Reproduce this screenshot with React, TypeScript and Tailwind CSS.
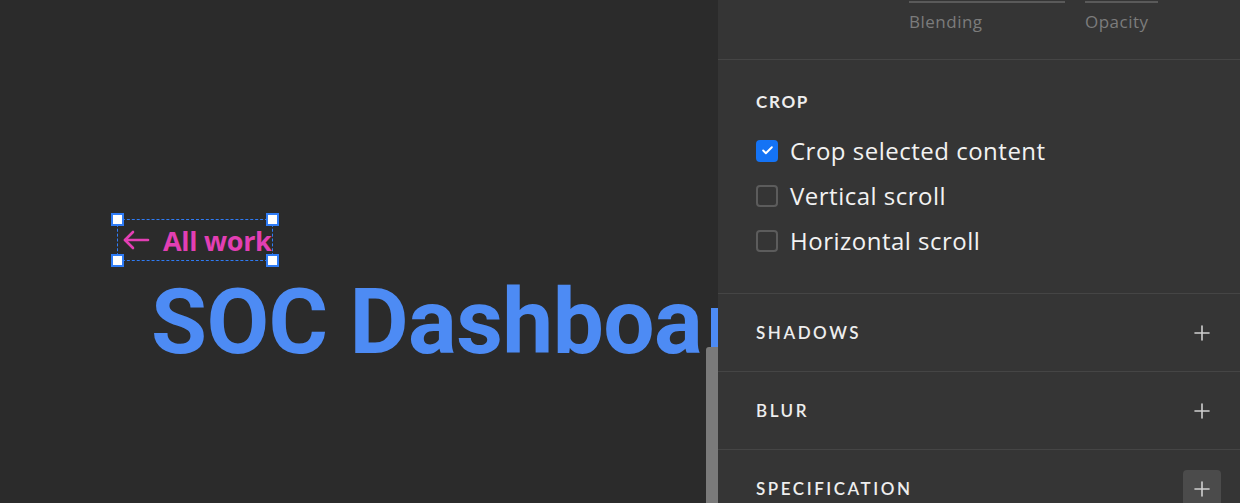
import { Check, Plus } from 'lucide-react';

const panelFont = { fontFamily: '"Lato", "Open Sans", sans-serif' };
const bodyFont = { fontFamily: '"Open Sans", "Lato", sans-serif' };

function Handle({ className }: { className: string }) {
  return <div className={`absolute w-[13px] h-[13px] bg-white border-2 border-[#2f7cf6] ${className}`} />;
}

function CheckRow({ label, checked }: { label: string; checked?: boolean }) {
  return (
    <div className="flex items-center gap-3 h-[45px]">
      {checked ? (
        <div className="w-[22px] h-[22px] rounded-[4px] bg-[#1473f5] flex items-center justify-center">
          <Check className="w-[13px] h-[13px] text-white" strokeWidth={3.5} />
        </div>
      ) : (
        <div className="w-[22px] h-[22px] rounded-[4px] border-2 border-[#5c5c5c]" />
      )}
      <span className="text-[24px] text-[#f2f2f2] leading-none tracking-[0.5px]" style={bodyFont}>
        {label}
      </span>
    </div>
  );
}

function Section({ title, boxed }: { title: string; boxed?: boolean }) {
  return (
    <div className="h-[78px] shrink-0 border-b border-[#454545] flex items-center justify-between pl-[38px] pr-[19px]">
      <span className="text-[17px] font-semibold tracking-[0.15em] text-[#eeeeee]">{title}</span>
      <div
        className={`w-[38px] h-[38px] flex items-center justify-center rounded-[4px] ${
          boxed ? 'bg-[#4b4b4b]' : ''
        }`}
      >
        <Plus className="w-[24px] h-[24px] text-[#d0d0d0]" strokeWidth={1.6} />
      </div>
    </div>
  );
}

export default function App() {
  return (
    <div className="w-[1240px] h-[503px] bg-[#2b2b2b] flex overflow-hidden relative">
      {/* canvas */}
      <div className="relative w-[718px] h-full overflow-hidden shrink-0">
        {/* All work selection */}
        <div className="absolute left-[117px] top-[219px] w-[156px] h-[42px] border-[1.5px] border-dashed border-[#2f7cf6]">
          <div className="flex items-center h-full pl-[4px] gap-[13px]">
            <svg width="28" height="22" viewBox="0 0 28 22" fill="none" stroke="#e33fb4" strokeWidth="2.6" strokeLinecap="round" strokeLinejoin="round">
              <path d="M26 11H3" />
              <path d="M11 3L3 11L11 19" />
            </svg>
            <span
              className="text-[27px] font-bold text-[#e33fb4] leading-none tracking-[-0.3px]"
              style={bodyFont}
            >
              All work
            </span>
          </div>
          <Handle className="-left-[7px] -top-[7px]" />
          <Handle className="-right-[7px] -top-[7px]" />
          <Handle className="-left-[7px] -bottom-[7px]" />
          <Handle className="-right-[7px] -bottom-[7px]" />
        </div>
        {/* title */}
        <div
          className="absolute left-[151px] top-[277px] text-[91px] font-bold text-[#4d8bf4] whitespace-nowrap leading-none tracking-[-0.6px] w-[555px] overflow-hidden"
          style={{ fontFamily: 'Roboto, "Liberation Sans", sans-serif' }}
        >
          SOC Dashboard
        </div>
        {/* scrollbar */}
        <div className="absolute left-[711px] top-[308px] w-[7px] h-[40px] bg-[#4d8bf4]" />
        <div className="absolute left-[706px] top-[347px] w-[12px] h-[160px] bg-[#7a7a7a] rounded-tl-[3px]" />
      </div>

      {/* inspector panel */}
      <div className="w-[522px] h-full bg-[#353535] flex flex-col" style={panelFont}>
        <div className="h-[60px] border-b border-[#454545] flex shrink-0">
          <div className="ml-[191px] w-[156px] flex flex-col">
            <div className="h-[2px] mt-[1px] bg-[#5a5a5a]" />
            <span className="mt-[6px] text-[17px] tracking-[0.5px] text-[#7c7c7c]" style={bodyFont}>Blending</span>
          </div>
          <div className="ml-[20px] w-[73px] flex flex-col">
            <div className="h-[2px] mt-[1px] bg-[#5a5a5a]" />
            <span className="mt-[6px] text-[17px] tracking-[0.5px] text-[#7c7c7c] whitespace-nowrap" style={bodyFont}>Opacity</span>
          </div>
        </div>
        <div className="h-[234px] border-b border-[#454545] pl-[38px] pt-[33px] shrink-0">
          <div className="text-[17px] font-bold tracking-[0.1em] text-[#eeeeee] leading-none mb-[18px]">CROP</div>
          <div>
            <CheckRow label="Crop selected content" checked />
            <CheckRow label="Vertical scroll" />
            <CheckRow label="Horizontal scroll" />
          </div>
        </div>
        <Section title="SHADOWS" />
        <Section title="BLUR" />
        <Section title="SPECIFICATION" boxed />
      </div>
    </div>
  );
}
